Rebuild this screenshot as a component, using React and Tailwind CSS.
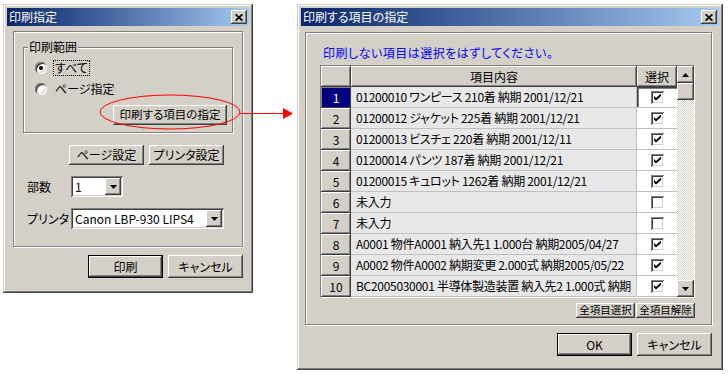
import React from "react";

const raised =
  "shadow-[inset_-1px_-1px_#404040,inset_1px_1px_#ffffff,inset_-2px_-2px_#808080,inset_2px_2px_#d4d0c8]";
const sunken =
  "shadow-[inset_1px_1px_#808080,inset_-1px_-1px_#ffffff,inset_2px_2px_#404040,inset_-2px_-2px_#d4d0c8]";
const frame =
  "shadow-[inset_-1px_-1px_#404040,inset_1px_1px_#d4d0c8,inset_-2px_-2px_#808080,inset_2px_2px_#ffffff]";
const etched =
  "border border-[#808080] shadow-[1px_1px_0_#ffffff,inset_1px_1px_0_#ffffff]";

function DownTri() {
  return (
    <svg width="7" height="4" viewBox="0 0 7 4">
      <polygon points="0,0 7,0 3.5,4" fill="#000" />
    </svg>
  );
}
function UpTri() {
  return (
    <svg width="7" height="4" viewBox="0 0 7 4">
      <polygon points="0,4 7,4 3.5,0" fill="#000" />
    </svg>
  );
}

function CloseBtn() {
  return (
    <div className={`w-[16px] h-[14px] bg-[#d4d0c8] flex items-center justify-center ${raised}`}>
      <svg width="8" height="7" viewBox="0 0 8 7">
        <path d="M0.6 0.3 L7.4 6.7 M7.4 0.3 L0.6 6.7" stroke="#000" strokeWidth="1.7" />
      </svg>
    </div>
  );
}

function TitleBar({ title }) {
  return (
    <div className="h-[18px] shrink-0 flex items-center justify-between bg-linear-to-r from-[#0a246a] to-[#a6caf0] pl-[2px] pr-[2px]">
      <span className="text-white text-[12px] leading-none">{title}</span>
      <CloseBtn />
    </div>
  );
}

function Btn({ children, className = "", def = false }) {
  return (
    <div
      className={`bg-[#d4d0c8] flex items-center justify-center leading-none whitespace-nowrap ${raised} ${
        def ? "border border-black" : ""
      } ${className}`}
    >
      {children}
    </div>
  );
}

function Checkbox({ checked }) {
  return (
    <div className={`w-[13px] h-[13px] bg-white flex items-center justify-center ${sunken}`}>
      {checked && (
        <svg width="7" height="7" viewBox="0 0 7 7">
          <polygon points="0,2 2,4 7,-0.5 7,2 2,6.5 0,4.5" fill="#000" />
        </svg>
      )}
    </div>
  );
}

function Radio({ checked }) {
  return (
    <div
      className={`w-[12px] h-[12px] rounded-full bg-white flex items-center justify-center shadow-[inset_1px_1px_#808080,inset_-1px_-1px_#ffffff,inset_2px_2px_#404040,inset_-2px_-2px_#d4d0c8]`}
    >
      {checked && <div className="w-[4px] h-[4px] rounded-full bg-black" />}
    </div>
  );
}

function Combo({ value, className = "" }) {
  return (
    <div className={`h-[21px] bg-white flex items-center p-[2px] ${sunken} ${className}`}>
      <span className="flex-1 text-[12px] pl-[2px] leading-none whitespace-nowrap">{value}</span>
      <div className={`w-[16px] h-[17px] bg-[#d4d0c8] flex items-center justify-center ${raised}`}>
        <DownTri />
      </div>
    </div>
  );
}

function LeftDialog() {
  return (
    <div className={`w-[250px] h-[289px] shrink-0 bg-[#d4d0c8] p-[4px] flex flex-col ${frame}`}>
      <TitleBar title="印刷指定" />
      <div className="flex flex-col px-[6px]">
        <div className={`mt-[5px] h-[216px] flex flex-col ${etched}`}>
          <div className={`relative ml-[9px] mt-[15px] w-[210px] h-[86px] flex flex-col pl-[11px] pt-[12px] ${etched}`}>
            <span className="absolute -top-[7px] left-[4px] bg-[#d4d0c8] px-[1px] text-[12px] leading-none">
              印刷範囲
            </span>
            <div className="h-[16px] flex items-center">
              <Radio checked />
              <span className="ml-[6px] border border-dotted border-black px-[1px] h-[16px] flex items-center leading-none">
                すべて
              </span>
            </div>
            <div className="h-[16px] mt-[5px] flex items-center">
              <Radio />
              <span className="ml-[6px] border border-transparent px-[1px] leading-none">ページ指定</span>
            </div>
            <div className="flex justify-end pr-[5px] mt-[8px]">
              <Btn className="w-[114px] h-[20px] text-[11.5px]">印刷する項目の指定</Btn>
            </div>
          </div>
          <div className="flex justify-end gap-[5px] mt-[12px] pr-[18px]">
            <Btn className="w-[75px] h-[20px]">ページ設定</Btn>
            <Btn className="w-[75px] h-[20px]">プリンタ設定</Btn>
          </div>
          <div className="flex items-center mt-[11px] pl-[13px]">
            <span className="w-[44px] leading-none">部数</span>
            <Combo value="1" className="w-[52px]" />
          </div>
          <div className="flex items-center mt-[11px] pl-[13px]">
            <span className="w-[44px] leading-none whitespace-nowrap">プリンタ</span>
            <Combo value="Canon LBP-930 LIPS4" className="w-[153px]" />
          </div>
        </div>
        <div className="flex justify-end gap-[5px] mt-[8px]">
          <Btn def className="w-[75px] h-[23px]">印刷</Btn>
          <Btn className="w-[75px] h-[23px]">キャンセル</Btn>
        </div>
      </div>
    </div>
  );
}

const rows = [
  { t: "01200010 ワンピース 210着 納期 2001/12/21", c: true },
  { t: "01200012 ジャケット 225着 納期 2001/12/21", c: true },
  { t: "01200013 ビスチェ 220着 納期 2001/12/11", c: true },
  { t: "01200014 パンツ 187着 納期 2001/12/21", c: true },
  { t: "01200015 キュロット 1262着 納期 2001/12/21", c: true },
  { t: "未入力", c: false },
  { t: "未入力", c: false },
  { t: "A0001 物件A0001 納入先1 1.000台 納期2005/04/27", c: true },
  { t: "A0002 物件A0002 納期変更 2.000式 納期2005/05/22", c: true },
  { t: "BC2005030001 半導体製造装置 納入先2 1.000式 納期", c: true },
];

function Table() {
  return (
    <div className="mt-[4px] w-[375px] h-[233px] flex border border-t-[#808080] border-l-[#808080] border-r-[#ffffff] border-b-[#ffffff]">
      <div className="w-[356px] flex flex-col">
        <div className="h-[21px] flex">
          <div className={`w-[30px] h-full bg-[#d4d0c8] ${raised}`} />
          <div className={`w-[286px] h-full bg-[#d4d0c8] flex items-center justify-center leading-none ${raised}`}>
            項目内容
          </div>
          <div className={`w-[40px] h-full bg-[#d4d0c8] flex items-center justify-center leading-none ${raised}`}>
            選択
          </div>
        </div>
        {rows.map((r, i) => (
          <div key={i} className="h-[21px] flex">
            {i === 0 ? (
              <div className="w-[30px] h-full bg-[#000080] text-white flex items-center justify-center leading-none shadow-[inset_-1px_-1px_#404040,inset_1px_1px_#808080]">
                {i + 1}
              </div>
            ) : (
              <div className={`w-[30px] h-full bg-[#d4d0c8] flex items-center justify-center leading-none ${raised}`}>
                {i + 1}
              </div>
            )}
            <div className="w-[286px] h-full bg-[#e8e8e8] border-r border-b border-[#c0c0c0] pl-[5px] flex items-center overflow-hidden whitespace-nowrap leading-none tracking-[-0.3px]">
              {r.t}
            </div>
            <div
              className={`w-[40px] h-full bg-white border-b border-[#c0c0c0] flex items-center justify-center ${
                i === 0 ? "shadow-[inset_1px_1px_#404040,inset_2px_2px_#808080]" : ""
              }`}
            >
              <Checkbox checked={r.c} />
            </div>
          </div>
        ))}
      </div>
      <div className="w-[17px] flex flex-col">
        <div className={`h-[17px] bg-[#d4d0c8] flex items-center justify-center ${raised}`}>
          <UpTri />
        </div>
        <div className={`h-[17px] bg-[#d4d0c8] ${raised}`} />
        <div className="flex-1 bg-[repeating-conic-gradient(#d4d0c8_0%_25%,#ffffff_0%_50%)] bg-[length:2px_2px]" />
        <div className={`h-[17px] bg-[#d4d0c8] flex items-center justify-center ${raised}`}>
          <DownTri />
        </div>
      </div>
    </div>
  );
}

function RightDialog() {
  return (
    <div className={`w-[426px] h-[366px] shrink-0 bg-[#d4d0c8] p-[4px] flex flex-col ${frame}`}>
      <TitleBar title="印刷する項目の指定" />
      <div className="flex flex-col pl-[4px] pr-[7px]">
        <div className={`mt-[6px] h-[293px] flex flex-col pl-[14px] pr-[16px] ${etched}`}>
          <div className="mt-[12px] h-[16px] flex items-center pl-[3px] text-[#0000ff] text-[12px] tracking-[0.5px] leading-none whitespace-nowrap">
            印刷しない項目は選択をはずしてください。
          </div>
          <Table />
          <div className="flex justify-end gap-[1px] mt-[5px]">
            <Btn className="w-[59px] h-[15px] text-[10.5px]">全項目選択</Btn>
            <Btn className="w-[59px] h-[15px] text-[10.5px]">全項目解除</Btn>
          </div>
        </div>
        <div className="flex justify-end gap-[5px] mt-[8px]">
          <Btn def className="w-[75px] h-[23px]">OK</Btn>
          <Btn className="w-[75px] h-[23px]">キャンセル</Btn>
        </div>
      </div>
    </div>
  );
}

export default function App() {
  return (
    <div className="relative w-[728px] h-[374px] overflow-hidden bg-white font-['Noto_Sans_CJK_JP','Noto_Sans',sans-serif] [font-feature-settings:'palt'] text-black text-[12px] flex items-start gap-[44px] pl-[3px] pt-[4px]">
      <LeftDialog />
      <RightDialog />
      <svg className="absolute left-0 top-0 pointer-events-none" width="728" height="374">
        <ellipse cx="170" cy="112" rx="70" ry="17" fill="none" stroke="#ff0000" strokeWidth="1" />
        <line x1="240" y1="113.5" x2="285" y2="113.5" stroke="#ff0000" strokeWidth="1" />
        <polygon points="283,108 293,113.5 283,119" fill="#ff0000" />
      </svg>
    </div>
  );
}
